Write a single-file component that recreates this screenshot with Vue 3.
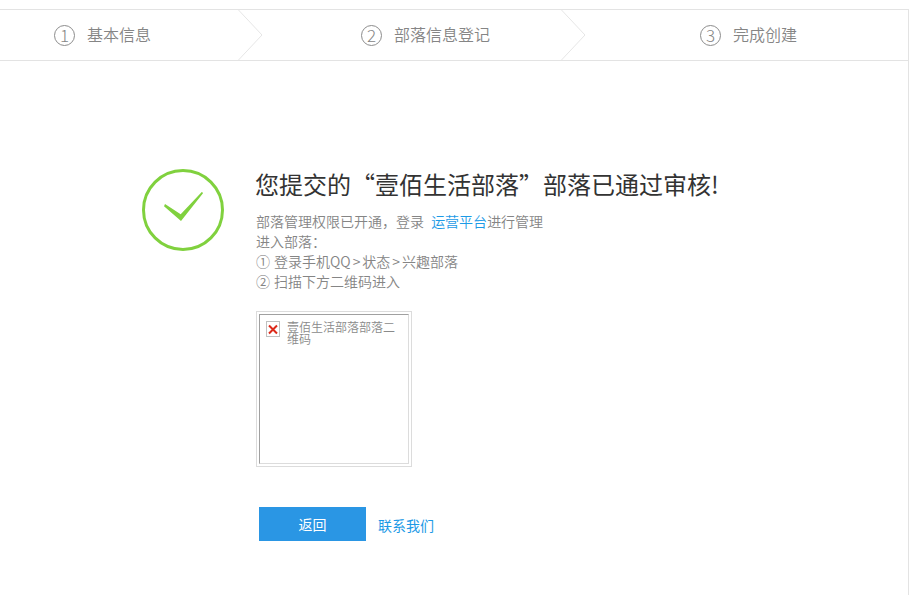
<script setup>
const steps = [
  { n: 1, label: '基本信息', cls: 'one' },
  { n: 2, label: '部落信息登记', cls: 'two' },
  { n: 3, label: '完成创建', cls: 'three' }
]
</script>

<template>
  <div class="page">
    <div class="frame">
      <div class="steps">
        <div v-for="(s, i) in steps" :key="s.n" class="step" :class="s.cls">
          <span class="num">{{ s.n }}</span>
          <span class="label">{{ s.label }}</span>
          <svg v-if="i < 2" class="chev" width="25" height="50" viewBox="0 0 25 50">
            <polyline points="0.5,0 24,25 0.5,50" fill="none" stroke="#e6e6e6" stroke-width="1" />
          </svg>
        </div>
      </div>

      <div class="result">
        <svg class="ok" width="82" height="82" viewBox="0 0 82 82">
          <circle cx="41" cy="41" r="39.5" fill="none" stroke="#80d13e" stroke-width="3" />
          <polygon points="23,35 38.7,45.3 60,22.7 61,24.3 39,52 22,37.3" fill="#80d13e" />
        </svg>
        <div class="body">
          <h1 class="title">您提交的“壹佰生活部落”部落已通过审核!</h1>
          <div class="desc">
            <p>部落管理权限已开通，登录 <a class="link portal">运营平台</a>进行管理</p>
            <p>进入部落：</p>
            <p><span class="mark">①</span>登录手机QQ<span class="gt">&gt;</span>状态<span class="gt">&gt;</span>兴趣部落</p>
            <p><span class="mark">②</span>扫描下方二维码进入</p>
          </div>
          <div class="qr">
            <div class="broken">
              <svg class="x" width="16" height="16" viewBox="0 0 16 16">
                <rect x="0.5" y="0.5" width="13" height="15" fill="#fff" stroke="#c0c0c0" />
                <path d="M3 4.5 L11 12.5 M11 4.5 L3 12.5" stroke="#dc2a1a" stroke-width="2" fill="none" />
              </svg>
              <span class="alt">壹佰生活部落部落二维码</span>
            </div>
          </div>
          <div class="actions">
            <button class="back" type="button">返回</button>
            <a class="link contact">联系我们</a>
          </div>
        </div>
      </div>
    </div>
  </div>
</template>

<style>
html, body { margin: 0; background: #fff; }
</style>

<style scoped>
.page {
  width: 909px;
  height: 595px;
  box-sizing: border-box;
  padding-top: 9px;
  overflow: hidden;
  background: #fff;
  font-family: "Noto Sans CJK SC", "Liberation Sans", sans-serif;
  color: #888;
}
.frame {
  height: 586px;
  box-sizing: border-box;
  border-right: 1px solid #e3e3e3;
}
.steps {
  display: grid;
  grid-template-columns: 238px 323px 1fr;
  height: 50px;
  border-top: 1px solid #e3e3e3;
  border-bottom: 1px solid #e3e3e3;
}
.step {
  position: relative;
  display: flex;
  align-items: center;
  gap: 12px;
  font-size: 16px;
  color: #858585;
}
.one { padding-left: 54px; }
.two { padding-left: 123px; }
.three { padding-left: 139px; }
.label { margin-bottom: 2px; font-weight: 350; }
.num {
  box-sizing: border-box;
  width: 21px;
  height: 21px;
  padding-bottom: 2px;
  border: 1px solid #8c8c8c;
  border-radius: 50%;
  display: flex;
  align-items: center;
  justify-content: center;
  font-size: 17px;
  line-height: 1;
  font-weight: 300;
}
.chev {
  position: absolute;
  left: 100%;
  top: 0;
  z-index: 1;
}
.result {
  display: flex;
  gap: 32px;
  padding: 108px 0 0 142px;
}
.ok { flex: none; }
.body { flex: 1; }
.title {
  margin: -1px 0 0 -1px;
  font-size: 24px;
  line-height: 32px;
  font-weight: 400;
  color: #333;
}
.desc {
  margin-top: 11px;
  font-size: 14px;
  line-height: 20px;
  font-weight: 350;
  color: #858585;
}
.desc p { margin: 0; }
.mark { display: inline-block; width: 18px; }
.gt { padding: 0 2px; }
.link { color: #1c9ae6; }
.portal { margin-left: 4px; }
.qr {
  margin-top: 20px;
  width: 150px;
  height: 150px;
  padding: 2px;
  border: 1px solid #dcdcdc;
}
.broken {
  box-sizing: border-box;
  width: 150px;
  height: 150px;
  border: 1px solid;
  border-color: #a0a0a0 #dcdcdc #dcdcdc #a0a0a0;
  padding: 6px 6px 0 6px;
  display: flex;
  gap: 5px;
  align-items: flex-start;
}
.x { flex: none; }
.alt {
  font-size: 12px;
  line-height: 12px;
  font-weight: 350;
  color: #8a8a8a;
}
.actions {
  margin-top: 40px;
  padding-left: 3px;
  display: flex;
  align-items: center;
  gap: 12px;
}
.back {
  width: 107px;
  height: 34px;
  border: 0;
  padding: 0;
  background: #2a96e4;
  color: #fff;
  font: 400 14px "Noto Sans CJK SC", "Liberation Sans", sans-serif;
}
.contact { font-size: 14px; margin-top: 2px; }
</style>
